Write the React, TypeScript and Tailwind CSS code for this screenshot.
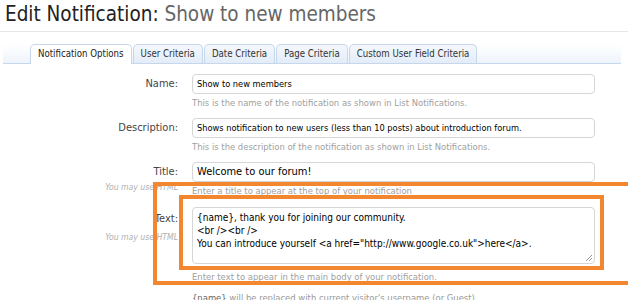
import React from "react";

const F = '"DejaVu Sans Condensed","DejaVu Sans",sans-serif';

function Row({
  label,
  value,
  help,
  note,
  big,
}: {
  label: string;
  value: string;
  help: string;
  note?: string;
  big?: boolean;
}) {
  return (
    <div className="flex">
      <div className="w-[178px] shrink-0 flex flex-col items-end">
        <div className="h-[20px] flex items-center text-[11px] text-[#444]">{label}</div>
        {note ? (
          <div className="mt-[-1px] text-[8.6px] italic text-[#b0b0b0]">{note}</div>
        ) : null}
      </div>
      <div className="ml-[14px] w-[403px]">
        <div
          className={
            big
              ? "h-[20px] border border-[#d6d6d6] rounded-[4px] bg-white flex items-center pl-[4px] text-[11px] text-black"
              : "h-[20px] border border-[#d6d6d6] rounded-[4px] bg-white flex items-center pl-[4px] text-[9.2px] text-black"
          }
        >
          {value}
        </div>
        <div className="mt-[3px] text-[9.4px] text-[#a0a0a0] leading-[12px]">{help}</div>
      </div>
    </div>
  );
}

export default function App() {
  return (
    <div
      className="relative w-[628px] h-[300px] overflow-hidden bg-white"
      style={{ fontFamily: F }}
    >
      <div className="pl-[5px] pt-[3px] h-[32px] border-b border-[#e6e6e6]">
        <span className="text-[20.5px] text-[#222] leading-[23px]">Edit Notification:</span>
        <span className="text-[20.5px] text-[#666] leading-[23px]"> Show to new members</span>
      </div>

      <div className="mt-[12px] ml-[3px] w-[618px] flex items-end h-[20px] border-b border-[#c6d7ec] bg-gradient-to-b from-white to-[#eef4fb] text-[9.6px] text-[#333]">
        <div className="w-[27px]" />
        <div className="h-[20px] mb-[-1px] px-[7px] flex items-center bg-white border border-b-0 border-[#c6d7ec] rounded-t-[5px] text-[#222]">
          Notification Options
        </div>
        {["User Criteria", "Date Criteria", "Page Criteria", "Custom User Field Criteria"].map(
          (t) => (
            <div
              key={t}
              className="h-[19px] px-[7px] flex items-center bg-gradient-to-b from-[#f4f8fd] to-[#e3ecf8] border border-b-0 border-[#c6d7ec] rounded-t-[5px] ml-[1px]"
            >
              {t}
            </div>
          )
        )}
      </div>

      <div className="mt-[10px] flex flex-col gap-[9px]">
        <Row
          label="Name:"
          value="Show to new members"
          help="This is the name of the notification as shown in List Notifications."
        />
        <Row
          label="Description:"
          value="Shows notification to new users (less than 10 posts) about introduction forum."
          help="This is the description of the notification as shown in List Notifications."
        />
        <Row
          label="Title:"
          value="Welcome to our forum!"
          help="Enter a title to appear at the top of your notification"
          note="You may use HTML"
          big
        />
        <div className="flex mt-[1px]">
          <div className="w-[178px] shrink-0 flex flex-col items-end">
            <div className="h-[20px] flex items-center text-[11px] text-[#444] mt-[2px]">Text:</div>
            <div className="mt-[2px] text-[8.6px] italic text-[#b0b0b0]">You may use HTML</div>
          </div>
          <div className="ml-[14px] w-[403px]">
            <div className="relative h-[57px] border border-[#d6d6d6] rounded-[4px] bg-white pl-[4px] pt-[3px] text-[10px] text-black leading-[13px] whitespace-pre">
              {"{name}, thank you for joining our community.\n<br /><br />\nYou can introduce yourself <a href=\"http://www.google.co.uk\">here</a>."}
              <svg className="absolute right-[1px] bottom-[1px]" width="8" height="8" viewBox="0 0 8 8">
                <path d="M7 1 L1 7 M7 4 L4 7" stroke="#999" strokeWidth="1" />
              </svg>
            </div>
            <div className="mt-[7px] text-[9.4px] text-[#a0a0a0] leading-[12px]">
              Enter text to appear in the main body of your notification.
            </div>
            <div className="mt-[9px] text-[9.4px] text-[#999] leading-[12px]">
              <span className="text-[#666]">{"{name}"}</span> will be replaced with current visitor's username (or Guest)
            </div>
          </div>
        </div>
      </div>

      <div className="absolute left-[153px] top-[182px] w-[500px] h-[103px] border-[4px] border-[#f2872f]" />
      <div className="absolute left-[179px] top-[195px] w-[425px] h-[75px] border-[4px] border-[#f2872f]" />
    </div>
  );
}
